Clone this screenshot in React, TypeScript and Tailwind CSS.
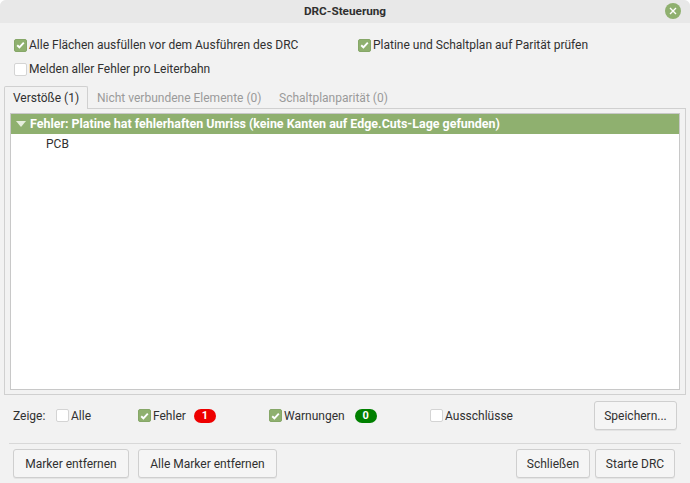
import React from 'react';

const font = { fontFamily: 'Roboto, sans-serif' };

const Check = ({ checked, label }: { checked?: boolean; label: string }) => (
  <div className="flex items-center h-[16px]">
    {checked ? (
      <span className="w-[13px] h-[13px] rounded-[2px] bg-[#8fb06f] border border-[#86a768] flex items-center justify-center">
        <svg width="9" height="8" viewBox="0 0 9 8" fill="none">
          <path d="M1.2 4.2 L3.4 6.3 L7.8 1.6" stroke="#fff" strokeWidth="1.9" />
        </svg>
      </span>
    ) : (
      <span className="w-[13px] h-[13px] rounded-[2px] bg-white border border-[#d4d4d4]" />
    )}
    <span className="ml-[2px] leading-[16px] whitespace-nowrap">{label}</span>
  </div>
);

const Btn = ({ label, w }: { label: string; w: string }) => (
  <button className={`h-[29px] ${w} rounded-[3px] border border-[#cfcfcf] bg-[#f5f5f5] text-[#303030] text-[12px] shadow-[0_1px_0_#e4e4e4]`}>
    {label}
  </button>
);

export default function App() {
  return (
    <div className="w-[690px] h-[483px] overflow-hidden rounded-t-[6px] bg-[#f2f2f2] text-[#303030] text-[12px] flex flex-col" style={font}>
      <div className="h-[23px] shrink-0 bg-[#e8e8e8] flex items-center justify-center relative">
        <span className="font-bold text-[11.75px]">DRC-Steuerung</span>
        <span className="absolute right-[9px] top-[3px] w-[16px] h-[16px] rounded-full bg-[#8fb06f] flex items-center justify-center">
          <svg width="8" height="8" viewBox="0 0 8 8" fill="none">
            <path d="M1 1 L7 7 M7 1 L1 7" stroke="#fff" strokeWidth="1.4" />
          </svg>
        </span>
      </div>

      <div className="flex items-start pl-[14px] pt-[14px]">
        <div className="w-[344px] flex flex-col gap-[8px]">
          <Check checked label="Alle Flächen ausfüllen vor dem Ausführen des DRC" />
          <Check label="Melden aller Fehler pro Leiterbahn" />
        </div>
        <Check checked label="Platine und Schaltplan auf Parität prüfen" />
      </div>

      <div className="flex mt-[9px] px-[4px] h-[23px] shrink-0">
        <div className="h-[23px] w-[84px] bg-[#f2f2f2] border border-b-0 border-[#d0d0d0] rounded-t-[2px] flex items-center justify-center relative z-10">
          Verstöße (1)
        </div>
        <div className="h-[24px] pl-[9px] w-[191px] flex items-center text-[#9a9a9a]">Nicht verbundene Elemente (0)</div>
        <div className="h-[24px] w-[118px] flex items-center text-[#9a9a9a]">Schaltplanparität (0)</div>
      </div>

      <div className="mx-[4px] -mt-[1px] h-[287px] shrink-0 border border-[#d0d0d0] p-[4px_5px]">
        <div className="h-full bg-white border border-[#c8c8c8]">
          <div className="h-[20px] bg-[#8fb06f] text-white font-bold text-[12.45px] flex items-center pl-[5px]">
            <svg width="10" height="6" viewBox="0 0 10 6" className="mr-[4px]">
              <path d="M0 0 H10 L5 6 Z" fill="#e6eedd" />
            </svg>
            Fehler: Platine hat fehlerhaften Umriss (keine Kanten auf Edge.Cuts-Lage gefunden)
          </div>
          <div className="pl-[35px] pt-[2px] leading-[16px]">PCB</div>
        </div>
      </div>

      <div className="flex items-center h-[29px] mt-[6px] shrink-0 pl-[13px] pr-[13px]">
        <span className="w-[43px]">Zeige:</span>
        <div className="w-[82px]"><Check label="Alle" /></div>
        <div className="w-[131px] flex items-center">
          <Check checked label="Fehler" />
          <span className="ml-[8px] w-[22px] h-[14px] rounded-full bg-[#ee0000] text-white font-bold text-[11px] leading-[14px] text-center">1</span>
        </div>
        <div className="w-[161px] flex items-center">
          <Check checked label="Warnungen" />
          <span className="ml-[10px] w-[22px] h-[14px] rounded-full bg-[#008000] text-white font-bold text-[11px] leading-[14px] text-center">0</span>
        </div>
        <Check label="Ausschlüsse" />
        <div className="ml-auto"><Btn label="Speichern..." w="w-[83px]" /></div>
      </div>

      <div className="mx-[9px] mt-[13px] h-[1px] shrink-0 bg-[#d8d8d8]" />

      <div className="flex items-center gap-[9px] mt-[5px] pl-[13px] pr-[15px]">
        <Btn label="Marker entfernen" w="w-[116px]" />
        <Btn label="Alle Marker entfernen" w="w-[139px]" />
        <div className="ml-auto flex gap-[5px]">
          <Btn label="Schließen" w="w-[74px]" />
          <Btn label="Starte DRC" w="w-[80px]" />
        </div>
      </div>
    </div>
  );
}
